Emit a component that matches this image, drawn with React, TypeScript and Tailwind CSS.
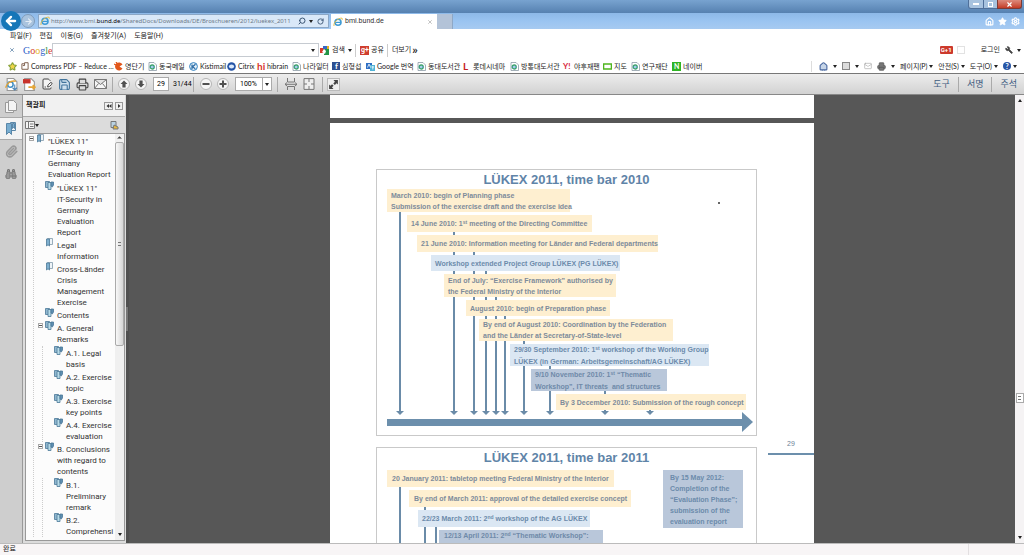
import React from 'react';
import {
  ChevronDown,
  FilePenLine,
  Home,
  Mail,
  Paperclip,
  Printer,
  RotateCw,
  Save,
  Search,
  Settings,
  Star,
  Wrench,
  X,
  ArrowLeft,
  ArrowRight,
  Binoculars,
} from 'lucide-react';

type Tone = 'yellow' | 'blue' | 'slate';

interface Milestone {
  id: string;
  tone: Tone;
  box: string;
  text: React.ReactNode;
}

interface Bookmark {
  title: string;
  single?: boolean;
  children?: Bookmark[];
}

const toneClass: Record<Tone, string> = {
  yellow: 'bg-[#feefd0] text-[#7d8b9a]',
  blue: 'bg-[#dbe7f3] text-[#6c8bab]',
  slate: 'bg-[#b9c7da] text-[#6f8aa9]',
};

const sup = (value: string) => <span className="relative -top-[2px] text-[5px]">{value}</span>;

const milestones2010: Milestone[] = [
  { id: 'm1', tone: 'yellow', box: 'ml-[10px] w-[183px] h-[23px] pl-[4px]', text: <>March 2010: begin of Planning phase<br />Submission of the exercise draft and the exercise idea</> },
  { id: 'm2', tone: 'yellow', box: 'ml-[30px] w-[185px] h-[17px] pl-[4px]', text: <>14 June 2010: 1{sup('st')} meeting of the Directing Committee</> },
  { id: 'm3', tone: 'yellow', box: 'ml-[40px] w-[241px] h-[17px] pl-[4px]', text: <>21 June 2010: Information meeting for Länder and Federal departments</> },
  { id: 'm4', tone: 'blue', box: 'ml-[54px] w-[189px] h-[16px] pl-[4px]', text: <>Workshop extended Project Group LÜKEX (PG LÜKEX)</> },
  { id: 'm5', tone: 'yellow', box: 'ml-[67px] w-[172px] h-[23px] pl-[4px]', text: <>End of July: “Exercise Framework” authorised by<br />the Federal Ministry of the Interior</> },
  { id: 'm6', tone: 'yellow', box: 'ml-[89px] w-[144px] h-[16px] pl-[4px]', text: <>August 2010: begin of Preparation phase</> },
  { id: 'm7', tone: 'yellow', box: 'ml-[102px] w-[194px] h-[22px] pl-[4px]', text: <>By end of August 2010: Coordination by the Federation<br />and the Länder at Secretary-of-State-level</> },
  { id: 'm8', tone: 'blue', box: 'ml-[133px] w-[199px] h-[22px] pl-[4px]', text: <>29/30 September 2010: 1{sup('st')} workshop of the Working Group<br />LÜKEX (in German: Arbeitsgemeinschaft/AG LÜKEX)</> },
  { id: 'm9', tone: 'slate', box: 'ml-[154px] w-[136px] h-[22px] pl-[4px]', text: <>9/10 November 2010: 1{sup('st')} “Thematic<br />Workshop”, IT threats&nbsp; and structures</> },
  { id: 'm10', tone: 'yellow', box: 'ml-[179px] w-[190px] h-[16px] pl-[4px]', text: <>By 3 December 2010: Submission of the rough concept</> },
];

const milestones2011: Milestone[] = [
  { id: 'n1', tone: 'yellow', box: 'ml-[10px] w-[227px] h-[17px] pl-[5px]', text: <>20 January 2011: tabletop meeting Federal Ministry of the Interior</> },
  { id: 'n2', tone: 'yellow', box: 'ml-[32px] w-[222px] h-[17px] pl-[5px]', text: <>By end of March 2011: approval of the detailed exercise concept</> },
  { id: 'n3', tone: 'blue', box: 'ml-[41px] w-[172px] h-[17px] pl-[4px]', text: <>22/23 March 2011: 2{sup('nd')} workshop of the AG LÜKEX</> },
  { id: 'n4', tone: 'slate', box: 'ml-[62px] w-[164px] h-[23px] pl-[5px]', text: <>12/13 April 2011: 2{sup('nd')} “Thematic Workshop”:<br />&nbsp;</> },
];

// [x, y where the line leaves its box]
const arrows2010 = [
  [23, 42], [77, 61], [97, 81], [109, 100], [119, 126], [128, 145], [147, 171], [173, 195], [228, 220], [273, 238],
];

const bookmarks: Bookmark[] = [
  {
    title: '"LÜKEX 11"\nIT-Security in\nGermany\nEvaluation Report',
    single: true,
    children: [
      { title: '"LÜKEX 11"\nIT-Security in\nGermany\nEvaluation\nReport' },
      { title: 'Legal\nInformation', single: true },
      { title: 'Cross-Länder\nCrisis\nManagement\nExercise', single: true },
      { title: 'Contents' },
      {
        title: 'A. General\nRemarks',
        children: [
          { title: 'A.1. Legal\nbasis' },
          { title: 'A.2. Exercise\ntopic' },
          { title: 'A.3. Exercise\nkey points' },
          { title: 'A.4. Exercise\nevaluation' },
        ],
      },
      {
        title: 'B. Conclusions\nwith regard to\ncontents',
        children: [{ title: 'B.1.\nPreliminary\nremark' }, { title: 'B.2.\nComprehensi' }],
      },
    ],
  },
];

const IeIcon = () => (
  <svg viewBox="0 0 10 10" className="size-[10px] shrink-0" fill="none">
    <circle cx="5" cy="5.3" r="3" stroke="#3f9bd6" strokeWidth="1.6" />
    <path d="M2.5 5.4h5.4" stroke="#3f9bd6" strokeWidth="1.2" />
    <path d="M1 9C0 6 5 .6 9 1.200c.6.4.4 1.300-.2 2" stroke="#e3bb3d" strokeWidth=".9" />
  </svg>
);

const PageIcon = () => (
  <svg viewBox="0 0 9 9" className="size-[9px] shrink-0" fill="none">
    <path d="M1 .5h5L8.500 3v5.500H1z" fill="#fff" stroke="#8c9aa6" strokeWidth=".8" />
    <circle cx="4.200" cy="5" r="2" stroke="#3aa06c" strokeWidth="1.300" />
    <path d="M2.400 5h4" stroke="#3b8fd0" strokeWidth=".9" />
  </svg>
);

const OutlinePageIcon = () => (
  <svg viewBox="0 0 9 9" className="size-[8px] shrink-0" fill="none" stroke="#75533f">
    <path d="M1 2h3V.8h4v7.400H1z" />
    <path d="M4 2v2H2" />
  </svg>
);

const FlameIcon = () => (
  <svg viewBox="0 0 9 9" className="size-[9px] shrink-0" fill="none">
    <path d="M8.500 2.500 5.500 4.500l3 2A4 4 0 1 1 8.500 2.500z" fill="#e2571b" />
    <path d="M2 0 3.500 2M0 2l2 1" stroke="#e2571b" strokeWidth="1.300" />
  </svg>
);

const RoundIcon = () => (
  <svg viewBox="0 0 9 9" className="size-[9px] shrink-0" fill="none">
    <circle cx="4.500" cy="4.500" r="3.900" fill="#e9f3fb" stroke="#2f7fbd" />
    <path d="M3 7V2.500M6.500 2.300 3.500 4.700l2.800 2" stroke="#2b6ca6" strokeWidth="1.300" />
  </svg>
);

const CitrixIcon = () => (
  <svg viewBox="0 0 9 9" className="size-[9px] shrink-0">
    <circle cx="4.500" cy="4.500" r="4.300" fill="#2453a6" />
    <ellipse cx="4.500" cy="4.500" rx="2.600" ry="2" fill="#dbe9fb" />
  </svg>
);

const TranslateIcon = () => (
  <svg viewBox="0 0 9 9" className="size-[9px] shrink-0" fill="none">
    <path d="M0 1h6v6H0z" fill="#2d6fc4" />
    <path d="M4 3h5v6H4z" fill="#51b3d6" />
    <path d="M1.500 5.500 3 2l1.500 3.500M5.500 5h2.500M6.800 4v3.500" stroke="#fff" strokeWidth=".8" />
  </svg>
);

const MapIcon = () => (
  <svg viewBox="0 0 9 9" className="size-[9px] shrink-0">
    <path d="M.5 2h8v5h-8z" fill="#fff" stroke="#4fb51e" strokeWidth="1.600" />
  </svg>
);

const favorites: { id: string; icon: React.ReactNode; label: string; width: string }[] = [
  { id: 'pdf', icon: <OutlinePageIcon />, label: 'Compress PDF – Reduce ...', width: 'w-[93px]' },
  { id: 'word', icon: <FlameIcon />, label: '영단기', width: 'w-[34px]' },
  { id: 'mail', icon: <PageIcon />, label: '동국메일', width: 'w-[41px]' },
  { id: 'kisti', icon: <RoundIcon />, label: 'Kistimail', width: 'w-[38px]' },
  { id: 'citrix', icon: <CitrixIcon />, label: 'Citrix', width: 'w-[30px]' },
  { id: 'hibrain', icon: <b className="w-[8px] text-[10px] text-[#d9322b]">hi</b>, label: 'hibrain', width: 'w-[35px]' },
  { id: 'job', icon: <PageIcon />, label: '나라일터', width: 'w-[40px]' },
  { id: 'fb', icon: <b className="h-[8px] w-[8px] bg-[#2d4f91] pl-[3px] text-[8px] leading-[9px] text-white">f</b>, label: '심형섭', width: 'w-[34px]' },
  { id: 'translate', icon: <TranslateIcon />, label: 'Google 번역', width: 'w-[51px]' },
  { id: 'dlib', icon: <PageIcon />, label: '동대도서관', width: 'w-[46px]' },
  { id: 'lotte', icon: <b className="w-[8px] text-[10px] text-[#c51f1f]">L</b>, label: '롯데시네마', width: 'w-[47px]' },
  { id: 'klib', icon: <PageIcon />, label: '방통대도서관', width: 'w-[53px]' },
  { id: 'yahoo', icon: <b className="w-[9px] text-[8px] text-[#d8283c]">Y!</b>, label: '야후재팬', width: 'w-[40px]' },
  { id: 'map', icon: <MapIcon />, label: '지도', width: 'w-[28px]' },
  { id: 'nrf', icon: <PageIcon />, label: '연구재단', width: 'w-[41px]' },
  { id: 'naver', icon: <b className="h-[9px] w-[9px] bg-[#2fb424] pl-[2px] text-[7px] leading-[9px] text-white">N</b>, label: '네이버', width: 'w-[34px]' },
];

const Caret = () => <span className="block h-0 w-0 shrink-0 border-x-[2px] border-t-[3px] border-x-transparent border-t-[#222]" />;

const TitleBar = () => (
  <header className="flex h-[13px] items-start justify-end bg-linear-to-b from-[#78a3d0] to-[#5681b0] pr-[2px]">
    <button type="button" aria-label="Minimize" className="flex h-[9px] w-[16px] items-center justify-center rounded-bl-[3px] border border-t-0 border-[#50709a] bg-[#a8c3df]">
      <span className="h-[2px] w-[6px] bg-white" />
    </button>
    <button type="button" aria-label="Restore" className="flex h-[9px] w-[13px] items-center justify-center border-b border-[#50709a] bg-[#a8c3df]">
      <span className="size-[5px] border border-white" />
    </button>
    <button type="button" aria-label="Close" className="flex h-[9px] w-[25px] items-center justify-center rounded-br-[3px] border border-t-0 border-[#7b3b36] bg-linear-to-b from-[#dc8a7c] to-[#c33a24]">
      <X className="size-[7px] text-white" strokeWidth={4} />
    </button>
  </header>
);

const AddressBar = () => (
  <div className="flex h-[16px] items-center bg-linear-to-b from-[#8db9e8] via-[#9ac4f1] to-[#a6caf1] pl-px">
    <button type="button" aria-label="Back" className="z-10 -my-[3px] flex size-[20px] shrink-0 items-center justify-center rounded-full bg-[#1676b8] text-white">
      <ArrowLeft className="size-[14px]" strokeWidth={4} />
    </button>
    <button type="button" aria-label="Forward" className="flex size-[14px] shrink-0 items-center justify-center rounded-full border border-[#7f9cbb] bg-[#a9c3de] text-[#e4edf6]">
      <ArrowRight className="size-[9px]" strokeWidth={3} />
    </button>
    <div className="ml-[3px] flex h-[14px] w-[291px] shrink-0 items-center border border-[#8ba7c6] bg-[#d9e8f8] px-px text-[#6d7a89]">
      <IeIcon />
      <span className="ml-px flex-1 font-['Noto_Sans',sans-serif] text-[6px] whitespace-nowrap">
        http://www.bmi.<span className="text-black">bund.de</span>/SharedDocs/Downloads/DE/Broschueren/2012/luekex_2011
      </span>
      <Search className="mr-[3px] size-[8px] shrink-0 -scale-x-100 text-[#3a5573]" strokeWidth={3} />
      <Caret />
      <RotateCw className="mr-[3px] ml-[4px] size-[7px] shrink-0 text-[#3a5573]" strokeWidth={3} />
    </div>
    <div className="ml-[2px] flex h-[15px] w-[106px] shrink-0 items-center self-end bg-white px-[2px] text-[#333]">
      <IeIcon />
      <span className="ml-[2px] flex-1">bmi.bund.de</span>
      <X className="mr-[2px] size-[6px] text-[#888]" />
    </div>
    <div className="h-[15px] w-[16px] shrink-0 self-end border-r border-[#8ea8c6] bg-[#b3c3d8]" />
    <div className="ml-auto flex items-center gap-[4px] pr-[4px] text-white">
      <Home className="size-[9px]" strokeWidth={3} />
      <Star className="size-[9px] fill-white" />
      <Settings className="size-[9px]" strokeWidth={3} />
    </div>
  </div>
);

const MenuBar = () => (
  <nav className="flex h-[13px] items-center gap-[8px] pt-px pl-[10px]">
    {['파일(F)', '편집', '이동(G)', '즐겨찾기(A)', '도움말(H)'].map((item) => (
      <button key={item} type="button">{item}</button>
    ))}
  </nav>
);

const GoogleBar = () => (
  <div className="flex h-[16px] items-center">
    <X className="ml-[9px] size-[6px] text-[#5a80a5]" strokeWidth={3} />
    <span className="ml-[8px] w-[29px] font-['Liberation_Serif',serif] text-[10px] leading-[11px]">
      <span className="text-[#2f62c9]">G</span>
      <span className="text-[#d43b2f]">o</span>
      <span className="text-[#e5b223]">o</span>
      <span className="text-[#2f62c9]">g</span>
      <span className="text-[#31983f]">l</span>
      <span className="text-[#d43b2f]">e</span>
    </span>
    <div className="flex h-[14px] w-[267px] items-center border border-[#c6cbd1] pr-[3px]">
      <input aria-label="Google" className="h-[12px] min-w-0 flex-1 outline-none" />
      <Caret />
    </div>
    <svg viewBox="0 0 9 9" className="ml-[1px] size-[9px]">
      <path d="M0 2h4v5H0z" fill="#d83b2c" />
      <path d="M3 0h4v3H3z" fill="#3567c7" />
      <path d="M7 0h2v4H7z" fill="#e5b223" />
      <path d="M4 3h5v6H4z" fill="#229447" />
      <path d="m2 6 2-3 2 2-1 3z" fill="#fff" />
    </svg>
    <button type="button" className="ml-[3px] flex w-[20px] items-center justify-between">검색 <Caret /></button>
    <span className="mx-[3px] h-[13px] w-px bg-[#ccc]" />
    <b className="ml-px size-[9px] bg-[#cf3d2e] pl-px text-[7px] leading-[9px] text-white">g+</b>
    <button type="button" className="ml-[2px]">공유</button>
    <span className="ml-[3px] mr-[4px] h-[13px] w-px bg-[#ccc]" />
    <button type="button" className="flex items-center gap-px whitespace-nowrap">더보기 <b className="text-[11px] leading-[11px]">»</b></button>
    <div className="ml-auto flex items-center pr-[3px]">
      <b className="h-[8px] w-[13px] rounded-[1px] bg-[#cc392c] text-center text-[6px] leading-[8px] text-white">G+1</b>
      <span className="ml-[4px] size-[8px] border border-[#e2e2e2]" />
      <button type="button" className="ml-[16px]">로그인</button>
      <Wrench className="ml-[5px] mr-[4px] size-[8px] -scale-x-100 fill-[#444] text-[#444]" />
      <Caret />
    </div>
  </div>
);

const FavoritesBar = () => (
  <div className="flex h-[16px] items-center border-b border-[#777] pt-px font-['Lato','Noto_Sans_CJK_KR',sans-serif]">
    <Star className="ml-[8px] mr-[4px] size-[9px] shrink-0 fill-[#f0d548] text-[#87a23b]" strokeWidth={3} />
    <div className="flex min-w-0 flex-1 items-center">
      {favorites.map((item) => (
        <a key={item.id} href="#" className={`flex shrink-0 items-center gap-[2px] whitespace-nowrap ${item.width}`}>
          {item.icon}
          {item.label}
        </a>
      ))}
    </div>
    <div className="flex shrink-0 items-center gap-[5px] border-l border-[#ddd] pr-[7px] pl-[7px]">
      <Home className="size-[9px] fill-[#c6d5e8] text-[#4968a0]" strokeWidth={3} />
      <Caret />
      <span className="size-[8px] border border-[#888] bg-[#ddd]" />
      <Caret />
      <Mail className="size-[8px] text-[#aaa]" />
      <Printer className="size-[9px] fill-[#777] text-[#555]" />
      <Caret />
      <button type="button" className="flex items-center gap-[2px]">페이지(P)<Caret /></button>
      <button type="button" className="flex items-center gap-[2px]">안전(S)<Caret /></button>
      <button type="button" className="flex items-center gap-[2px]">도구(O)<Caret /></button>
      <span className="flex items-center gap-[2px]">
        <b className="size-[8px] rounded-full bg-[#2755a5] text-center text-[7px] leading-[8px] text-white">?</b>
        <Caret />
      </span>
    </div>
  </div>
);

const Divider = () => <span className="h-[15px] w-px shrink-0 bg-[#aaa]" />;

const RoundButton: React.FC<{ label: string; path: string }> = ({ label, path }) => (
  <button type="button" aria-label={label} className="flex size-[12px] shrink-0 items-center justify-center rounded-full border border-[#b5b5b5] bg-[#f5f5f5]">
    <svg viewBox="0 0 8 8" className="size-[8px]" fill="#505050"><path d={path} /></svg>
  </button>
);

const PdfToolbar = () => (
  <div className="flex h-[21px] items-center border-b border-[#888] bg-linear-to-b from-[#ededed] to-[#d2d2d2] pl-[5px] text-[#444]">
    <div className="flex items-center gap-[5px]">
      <svg viewBox="0 0 12 12" className="size-[13px]" fill="none">
        <path d="M2 .5h6l3 3v8H2z" fill="#fff" stroke="#999" />
        <circle cx="5" cy="6" r="2.500" stroke="#3f8fc6" strokeWidth="1.400" />
        <path d="M.5 9C2 5 5 2 10 3" stroke="#e0a43b" strokeWidth="1.200" />
        <path d="M9 6v5M7 9l2 2 2-2" stroke="#4f86b5" />
      </svg>
      <svg viewBox="0 0 12 12" className="size-[13px]" fill="none">
        <path d="M1.500.5h6l3 3v8h-9z" fill="#fff" stroke="#9a9a9a" />
        <path d="M0 1h7v4H0z" fill="#c8322b" />
        <path d="M5 8.500h6M9 6.500l2 2-2 2" stroke="#e5a537" strokeWidth="1.600" />
      </svg>
      <FilePenLine className="size-[12px] fill-[#f4f4f4]" />
      <Save className="size-[13px] fill-[#cfe0ee] text-[#41739b]" />
      <Printer className="size-[13px] fill-[#ddd]" />
      <svg viewBox="0 0 13 10" className="h-[10px] w-[13px]" fill="#f6f6f6" stroke="#777">
        <path d="M.5.5h12v9H.5zM.5.500l6 5 6-5M.5 9.500l4-5M12.500 9.500l-4-5" />
      </svg>
    </div>
    <span className="mx-[5px] h-[15px] w-px bg-[#aaa]" />
    <div className="flex items-center gap-[5px]">
      <RoundButton label="Previous page" path="M4 .5 7.500 4H5.600v3.500H2.400V4H.5z" />
      <RoundButton label="Next page" path="M4 7.500.5 4h1.900V.5h3.200V4h1.900z" />
    </div>
    <input aria-label="Page" defaultValue="29" className="ml-[6px] h-[14px] w-[16px] border border-[#aaa] bg-white text-center text-[7px] text-black" />
    <span className="ml-[4px] w-[20px] text-[7px] text-black">31/44</span>
    <Divider />
    <div className="ml-[6px] flex items-center gap-[5px]">
      <RoundButton label="Zoom out" path="M.5 3h7v2h-7z" />
      <RoundButton label="Zoom in" path="M.5 3H3V.5h2V3h2.500v2H5v2.500H3V5H.5z" />
    </div>
    <div className="ml-[6px] mr-[5px] grid h-[14px] w-[37px] grid-cols-[26px_1fr] items-center border border-[#aaa] bg-white">
      <select aria-label="Zoom" className="col-span-2 col-start-1 row-start-1 h-[12px] appearance-none bg-transparent pl-[4px] text-[7px] text-black">
        <option>100%</option>
      </select>
      <span className="pointer-events-none col-start-2 row-start-1 flex h-[12px] items-center justify-center border-l border-[#aaa]"><Caret /></span>
    </div>
    <Divider />
    <div className="mx-[7px] flex items-center gap-[6px]">
      <svg viewBox="0 0 12 12" className="size-[12px]" fill="none" stroke="#777">
        <path d="M2.500 0v4h7V0M2.500 12V8.500h7V12M0 6.300h12" />
        <path d="M2 4.500 0 6.300 2 8M10 4.500l2 1.800L10 8" />
      </svg>
      <svg viewBox="0 0 12 12" className="size-[12px]" fill="none" stroke="#777">
        <path d="M1 .6h10v10.800H1z" fill="#eee" />
        <path d="M6 1v3M6 8v3M1 6h3M8 6h3" />
      </svg>
    </div>
    <Divider />
    <button type="button" aria-label="Full screen" className="ml-[4px] flex size-[13px] items-center justify-center border border-[#bbb] bg-[#eee]">
      <svg viewBox="0 0 10 10" className="size-[11px]" fill="#444">
        <path d="M5 1h4v4L7.800 3.800 6.200 5.400 4.800 4l1.500-1.600zM5 9H1V5l1.200 1.200 1.500-1.500 1.400 1.400-1.500 1.500z" />
      </svg>
    </button>
    <div className="ml-auto flex items-center pr-[7px] text-[9px] text-[#3f5c80]">
      <button type="button" className="px-[8px]">도구</button>
      <Divider />
      <button type="button" className="px-[8px]">서명</button>
      <Divider />
      <button type="button" className="pl-[8px]">주석</button>
    </div>
  </div>
);

const BookmarkIcon: React.FC<{ single?: boolean }> = ({ single }) => (
  <svg viewBox="0 0 9 9" className="mr-[3px] size-[9px] shrink-0" strokeWidth=".8">
    {single ? (
      <>
        <path d="M2.500.5h5v6h-5z" fill="#eef4f8" stroke="#8299ab" />
        <path d="M1.500 1h3v7L3 6.800 1.500 8z" fill="#7fb0cf" stroke="#4b7898" />
      </>
    ) : (
      <>
        <path d="M.5.5h4v6h-4z" fill="#8fb7cf" stroke="#4b7898" />
        <path d="M3 1.500h3v7H3z" fill="#b7dbe8" stroke="#4b7898" />
        <path d="M6 1h2.500v3L7.300 6 6 5z" fill="#5e8fb2" stroke="#4b7898" />
      </>
    )}
  </svg>
);

const BookmarkNode: React.FC<{ item: Bookmark }> = ({ item }) => (
  <li>
    <div className="flex pb-[2px]">
      <span className="mr-px w-[6px] shrink-0 pt-[2px]">
        {item.children && (
          <button type="button" aria-label="Collapse" className="flex size-[5px] items-center border border-[#aaa] bg-white">
            <span className="h-px w-full bg-[#555]" />
          </button>
        )}
      </span>
      <BookmarkIcon single={item.single} />
      <a href="#" className="-mb-[2px] min-h-[12px] pt-[2px] whitespace-pre text-[#333]">{item.title}</a>
    </div>
    {item.children && (
      <ul className="mt-px ml-[4px] border-l border-dotted border-[#ccc] pl-[4px]">
        {item.children.map((child) => (
          <BookmarkNode key={child.title} item={child} />
        ))}
      </ul>
    )}
  </li>
);

const Sidebar = () => (
  <aside className="flex w-[126px] shrink-0 bg-[#dcdcdc]">
    <div className="flex w-[23px] flex-col items-center border-r border-[#999] bg-[#cecece] text-[#777]">
      <div className="flex h-[22px] w-full items-center justify-center">
        <svg viewBox="0 0 12 13" className="h-[13px] w-[12px]" fill="#f4f4f4" stroke="#999">
          <path d="M3.500.5h5l3 3v7h-8z" />
          <path d="M.5 2.500h3v8h5v2h-8z" />
        </svg>
      </div>
      <div className="flex h-[23px] w-full items-center justify-center border-y border-[#aaa] bg-[#f3f3f3]">
        <svg viewBox="0 0 12 13" className="h-[13px] w-[12px]" stroke="#5a87a8">
          <path d="M5.500.5h5v8h-5z" fill="#edf3f7" />
          <path d="M1.500 1.500h5v11L4 10l-2.500 2.500z" fill="#78add0" />
          <path d="M7.500 1.500h2v5l-1-1-1 1z" fill="#78add0" />
        </svg>
      </div>
      <Paperclip className="mt-[5px] size-[13px] text-[#999]" strokeWidth={3} />
      <Binoculars className="mt-[10px] size-[12px] fill-[#999] text-[#777]" />
    </div>
    <div className="flex min-w-0 flex-1 flex-col pr-px">
      <div className="flex h-[22px] items-center border-b border-[#aaa] bg-[#f1f1f1] pr-[2px] pl-[3px]">
        <h2 className="flex-1 text-[7px] font-bold text-[#222]">책갈피</h2>
        <button type="button" aria-label="Collapse panel" className="flex h-[8px] w-[9px] items-center justify-center border border-[#999]">
          <svg viewBox="0 0 6 4" className="h-[4px] w-[6px]" fill="#333"><path d="M3 0v4L.5 2zM5.500 0v4L3 2z" /></svg>
        </button>
        <button type="button" aria-label="Expand panel" className="ml-[2px] flex size-[8px] items-center justify-center border border-[#999]">
          <svg viewBox="0 0 4 4" className="size-[4px]" fill="#333"><path d="M1 0v4l2.500-2z" /></svg>
        </button>
      </div>
      <div className="flex h-[16px] items-center px-[2px]">
        <svg viewBox="0 0 10 8" className="h-[8px] w-[10px]" fill="#f5f5f5" stroke="#777">
          <path d="M.5.5h9v7h-9zM3.500.5v7M5 3h3.500M5 5.500h3.500" />
        </svg>
        <Caret />
        <svg viewBox="0 0 9 9" className="mr-[4px] ml-auto size-[9px]" stroke="#777">
          <path d="M1 .5h5v6H1z" fill="#b9d2e2" />
          <path d="m3 8 1-4 4 2v2z" fill="#e6b740" />
        </svg>
      </div>
      <div className="mb-[2px] ml-[2px] flex min-h-0 flex-1 overflow-hidden border border-[#999] bg-[#fcfcfc]">
        <ul className="h-0 min-w-0 flex-1 pl-[3px] text-[8px] leading-[11px]">
          {bookmarks.map((item) => (
            <BookmarkNode key={item.title} item={item} />
          ))}
        </ul>
        <div className="flex w-[9px] shrink-0 flex-col items-center bg-[#f0f0f0]">
          <ChevronDown className="size-[7px] rotate-180 fill-[#333]" />
          <div className="mt-px flex h-[204px] w-full items-center justify-center rounded-[2px] border border-[#aaa] bg-linear-to-r from-[#f8f8f8] to-[#d5d5d5]">
            <span className="h-[4px] w-[3px] border-y border-[#777]" />
          </div>
          <span className="mt-auto mb-[4px]"><Caret /></span>
        </div>
      </div>
    </div>
  </aside>
);

const MilestoneList: React.FC<{ items: Milestone[] }> = ({ items }) => (
  <ul className="relative flex flex-col gap-[3px]">
    {items.map((item) => (
      <li key={item.id} className={`flex items-center whitespace-nowrap ${item.box} ${toneClass[item.tone]}`}>
        <span>{item.text}</span>
      </li>
    ))}
  </ul>
);

const Timeline2010 = () => (
  <section className="relative h-[267px] border border-[#c9c9c9]">
    <svg className="absolute inset-0 h-full w-full" stroke="#6a8ba8" strokeWidth="2" fill="#6a8ba8">
      {arrows2010.map(([x, y]) => (
        <g key={x}>
          <path d={`M${x} ${y}V242`} />
          <path d={`M${x - 4} 241h8l-4 4z`} stroke="none" />
        </g>
      ))}
      <circle cx="342" cy="33" r="1" fill="#333" stroke="none" />
    </svg>
    <h2 className="pt-px text-center text-[13px] leading-[18px] font-bold text-[#5f84a8]">LÜKEX 2011, time bar 2010</h2>
    <MilestoneList items={milestones2010} />
    <div className="mt-[2px] mr-[3px] ml-[10px] flex items-center">
      <span className="h-[7px] flex-1 bg-[#6c8fac]" />
      <svg viewBox="0 0 11 20" className="h-[20px] w-[11px]" fill="#6c8fac"><path d="M0 0 11 10 0 20z" /></svg>
    </div>
  </section>
);

const Timeline2011 = () => (
  <section className="relative mt-[11px] h-[267px] border border-[#c9c9c9]">
    <svg className="absolute inset-0 h-full w-full" stroke="#6a8ba8" strokeWidth="2">
      <path d="M23 39V240M48 59V240M59 79V240" />
    </svg>
    <h2 className="mb-[3px] pt-px text-center text-[13px] leading-[18px] font-bold text-[#5f84a8]">LÜKEX 2011, time bar 2011</h2>
    <div className="flex items-start justify-between pr-[13px]">
      <MilestoneList items={milestones2011} />
      <p className="w-[80px] bg-[#b9c7da] pt-[2px] pb-px pl-[7px] whitespace-nowrap text-[#6c8bab]">
        By 15 May 2012:<br />Completion of the<br />“Evaluation Phase”;<br />submission of the<br />evaluation report
      </p>
    </div>
  </section>
);

const DocumentView = () => (
  <main className="flex min-w-0 flex-1 bg-[#575757]">
    <div className="flex w-[3px] items-center bg-[#505050]"><span className="h-[24px] w-[2px] bg-[#777]" /></div>
    <div className="flex min-w-0 flex-1 flex-col items-center overflow-hidden">
      <div className="h-[23px] w-[484px] shrink-0 bg-white" />
      <article className="mt-[5px] flex h-0 w-[484px] flex-1 overflow-hidden bg-white pt-[46px] pl-[46px] font-['Liberation_Sans',Arial,sans-serif] text-[7px] leading-[11px] font-bold">
        <div className="w-[381px] shrink-0">
          <Timeline2010 />
          <Timeline2011 />
        </div>
        <div className="ml-[11px] flex-1 pt-[269px]">
          <div className="border-b-[2px] border-[#6c8fac] pb-[4px] text-center text-[7px] font-normal text-[#6d8296]">29</div>
        </div>
      </article>
    </div>
    <div className="flex w-[9px] shrink-0 flex-col items-center bg-[#f5f3f4]">
      <span className="mt-[4px] rotate-180"><Caret /></span>
      <span className="mt-[291px] flex h-[10px] w-[8px] items-center justify-center border border-[#aaa] bg-white"><span className="h-[4px] w-[3px] border-y border-[#777]" /></span>
      <span className="mt-auto mb-[4px]"><Caret /></span>
    </div>
  </main>
);

export default function App() {
  return (
    <div className="flex h-screen flex-col overflow-hidden bg-white font-['Roboto','Noto_Sans_CJK_KR',sans-serif] text-[7px] leading-[11px] text-[#222]">
      <TitleBar />
      <AddressBar />
      <MenuBar />
      <GoogleBar />
      <FavoritesBar />
      <PdfToolbar />
      <div className="flex min-h-0 flex-1">
        <Sidebar />
        <DocumentView />
      </div>
      <footer className="flex h-[12px] shrink-0 justify-between border-t border-[#bbb] bg-[#f8f5f6] pl-[3px] leading-[11px]">
        <span>완료</span>
        <span className="w-[56px] border-l border-[#e3dfe1]" />
      </footer>
    </div>
  );
}
